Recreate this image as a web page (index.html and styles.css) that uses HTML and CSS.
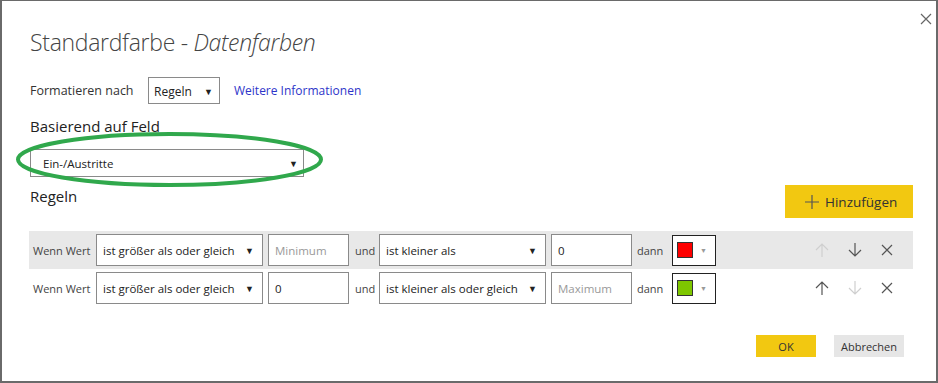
FILE: index.html
```html
<!DOCTYPE html>
<html lang="de">

<head>
    <meta charset="UTF-8">
    <title>Standardfarbe - Datenfarben</title>
    <link rel="stylesheet" href="styles.css">
</head>

<body>
    <div class="dialog">
        <!-- close -->
        <span class="close">
            <svg width="12" height="12" viewBox="0 0 12 12"><path d="M1 1 L11 11 M11 1 L1 11" stroke="#666" stroke-width="1.2" fill="none"/></svg>
        </span>

        <h1 class="title">Standardfarbe - <em>Datenfarben</em></h1>

        <div class="format-row">
            <span class="label">Formatieren nach</span>
            <div class="dropdown small">
                <span>Regeln</span>
                <span class="caret">▼</span>
            </div>
            <a class="link" href="#">Weitere Informationen</a>
        </div>

        <div class="section-label">Basierend auf Feld</div>
        <div class="field-wrap">
            <div class="dropdown field">
                <span>Ein-/Austritte</span>
                <span class="caret">▼</span>
            </div>
            <svg class="marker" width="314" height="62" viewBox="0 0 314 62">
                <ellipse cx="155.5" cy="29.5" rx="151.5" ry="25.5" fill="none" stroke="#30a84c" stroke-width="4"/>
            </svg>
        </div>

        <div class="rules-head">
            <span class="section-label">Regeln</span>
            <button class="add-btn">
                <svg width="14" height="14" viewBox="0 0 14 14"><path d="M7 0 V14 M0 7 H14" stroke="#555" stroke-width="1.2"/></svg>
                Hinzufügen
            </button>
        </div>

        <div class="rules">
            <div class="rule shaded">
                <span class="when">Wenn Wert</span>
                <div class="dropdown op"><span>ist größer als oder gleich</span><span class="caret">▼</span></div>
                <div class="value placeholder">Minimum</div>
                <span class="joiner">und</span>
                <div class="dropdown op"><span>ist kleiner als</span><span class="caret">▼</span></div>
                <div class="value">0</div>
                <span class="then">dann</span>
                <div class="color-pick"><span class="swatch red"></span><span class="mini-caret">▼</span></div>
                <div class="actions">
                    <svg class="act" width="14" height="16" viewBox="0 0 14 16"><path d="M7 15 V2 M1 8 L7 2 L13 8" stroke="#cfcfcf" stroke-width="1.2" fill="none"/></svg>
                    <svg class="act" width="14" height="16" viewBox="0 0 14 16"><path d="M7 1 V14 M1 8 L7 14 L13 8" stroke="#555" stroke-width="1.2" fill="none"/></svg>
                    <svg class="act" width="12" height="12" viewBox="0 0 12 12"><path d="M1 1 L11 11 M11 1 L1 11" stroke="#555" stroke-width="1.2" fill="none"/></svg>
                </div>
            </div>
            <div class="rule">
                <span class="when">Wenn Wert</span>
                <div class="dropdown op"><span>ist größer als oder gleich</span><span class="caret">▼</span></div>
                <div class="value">0</div>
                <span class="joiner">und</span>
                <div class="dropdown op"><span>ist kleiner als oder gleich</span><span class="caret">▼</span></div>
                <div class="value placeholder">Maximum</div>
                <span class="then">dann</span>
                <div class="color-pick"><span class="swatch green"></span><span class="mini-caret">▼</span></div>
                <div class="actions">
                    <svg class="act" width="14" height="16" viewBox="0 0 14 16"><path d="M7 15 V2 M1 8 L7 2 L13 8" stroke="#555" stroke-width="1.2" fill="none"/></svg>
                    <svg class="act" width="14" height="16" viewBox="0 0 14 16"><path d="M7 1 V14 M1 8 L7 14 L13 8" stroke="#cfcfcf" stroke-width="1.2" fill="none"/></svg>
                    <svg class="act" width="12" height="12" viewBox="0 0 12 12"><path d="M1 1 L11 11 M11 1 L1 11" stroke="#555" stroke-width="1.2" fill="none"/></svg>
                </div>
            </div>
        </div>

        <div class="footer">
            <button class="ok-btn">OK</button>
            <button class="cancel-btn">Abbrechen</button>
        </div>
    </div>
</body>

</html>
```

FILE: styles.css
```css
body {
    margin: 0;
    font-family: "Open Sans", "Noto Sans", sans-serif;
    color: #333;
}

.dialog {
    position: relative;
    width: 938px;
    height: 383px;
    box-sizing: border-box;
    border: 2px solid #6a6a6a;
    border-top-width: 1px;
    padding: 0 23px 0 28px;
    background: #fff;
}

.close {
    position: absolute;
    top: 7px;
    right: 4px;
}

.title {
    margin: 0;
    padding-top: 23px;
    height: 36px;
    font-size: 23px;
    font-weight: 300;
    line-height: 36px;
    letter-spacing: -0.3px;
    color: #444;
}

.title em {
    font-style: italic;
}

.format-row {
    display: flex;
    align-items: center;
    margin-top: 17px;
    height: 27px;
}

.label {
    font-size: 12.5px;
    color: #333;
    width: 118px;
}

.dropdown {
    display: flex;
    align-items: center;
    justify-content: space-between;
    flex-shrink: 0;
    box-sizing: border-box;
    border: 1px solid #8a8a8a;
    background: #fff;
    font-size: 11.5px;
    color: #222;
    white-space: nowrap;
    padding: 0 6px 0 5px;
}

.caret {
    font-size: 9px;
    color: #222;
}

.dropdown.small {
    width: 72px;
    height: 27px;
    padding-top: 2px;
    font-size: 12px;
}

.link {
    margin-left: 14px;
    font-size: 12px;
    color: #2d34c9;
    text-decoration: none;
}

.section-label {
    font-size: 15px;
    color: #222;
}

.format-row + .section-label {
    margin-top: 10px;
    line-height: 24px;
}

.field-wrap {
    position: relative;
    width: 274px;
    margin-top: 11px;
}

.dropdown.field {
    height: 28px;
    padding-left: 12px;
    padding-right: 5px;
}

.marker {
    position: absolute;
    left: -16px;
    top: -19px;
}

.rules-head {
    display: flex;
    justify-content: space-between;
    align-items: flex-start;
    margin-top: 8px;
}

.rules-head .section-label {
    line-height: 22px;
}

.add-btn {
    display: flex;
    align-items: center;
    gap: 6px;
    width: 128px;
    height: 33px;
    border: none;
    background: #f2c811;
    font-family: inherit;
    font-size: 13.5px;
    color: #333;
    padding: 0 0 0 20px;
}

.rules {
    margin-top: 13px;
    margin-left: -1px;
}

.rule {
    display: flex;
    align-items: center;
    height: 38px;
    padding-left: 4px;
    font-size: 11px;
    color: #444;
    white-space: nowrap;
}

.rule > * {
    flex-shrink: 0;
}

.rule.shaded {
    background: #e8e8e8;
}

.when {
    width: 63px;
}

.dropdown.op {
    width: 167px;
    height: 32px;
    padding-left: 6px;
    padding-right: 8px;
}

.value {
    box-sizing: border-box;
    width: 81px;
    height: 32px;
    margin-left: 5px;
    border: 1px solid #8a8a8a;
    background: #fff;
    font-size: 11.5px;
    color: #222;
    padding: 8px 0 0 6px;
}

.value.placeholder {
    color: #999;
}

.joiner {
    margin-left: 6px;
    width: 24px;
}

.then {
    margin-left: 5px;
    width: 35px;
}

.color-pick {
    display: flex;
    align-items: center;
    box-sizing: border-box;
    width: 44px;
    height: 31px;
    border: 1px solid #222;
    background: #fff;
    padding-left: 4px;
}

.swatch {
    width: 14px;
    height: 14px;
    border: 1px solid #333;
}

.swatch.red {
    background: #fe0000;
}

.swatch.green {
    background: #7ec700;
}

.mini-caret {
    margin-left: 7px;
    font-size: 7px;
    color: #999;
}

.actions {
    display: flex;
    align-items: center;
    gap: 19px;
    margin-left: 99px;
}

.footer {
    display: flex;
    justify-content: flex-end;
    gap: 18px;
    margin-top: 28px;
    padding-right: 9px;
}

.ok-btn, .cancel-btn {
    height: 22px;
    border: none;
    font-family: inherit;
    font-size: 11px;
    color: #333;
}

.ok-btn {
    width: 60px;
    background: #f2c811;
}

.cancel-btn {
    width: 70px;
    background: #e6e6e6;
}
```
